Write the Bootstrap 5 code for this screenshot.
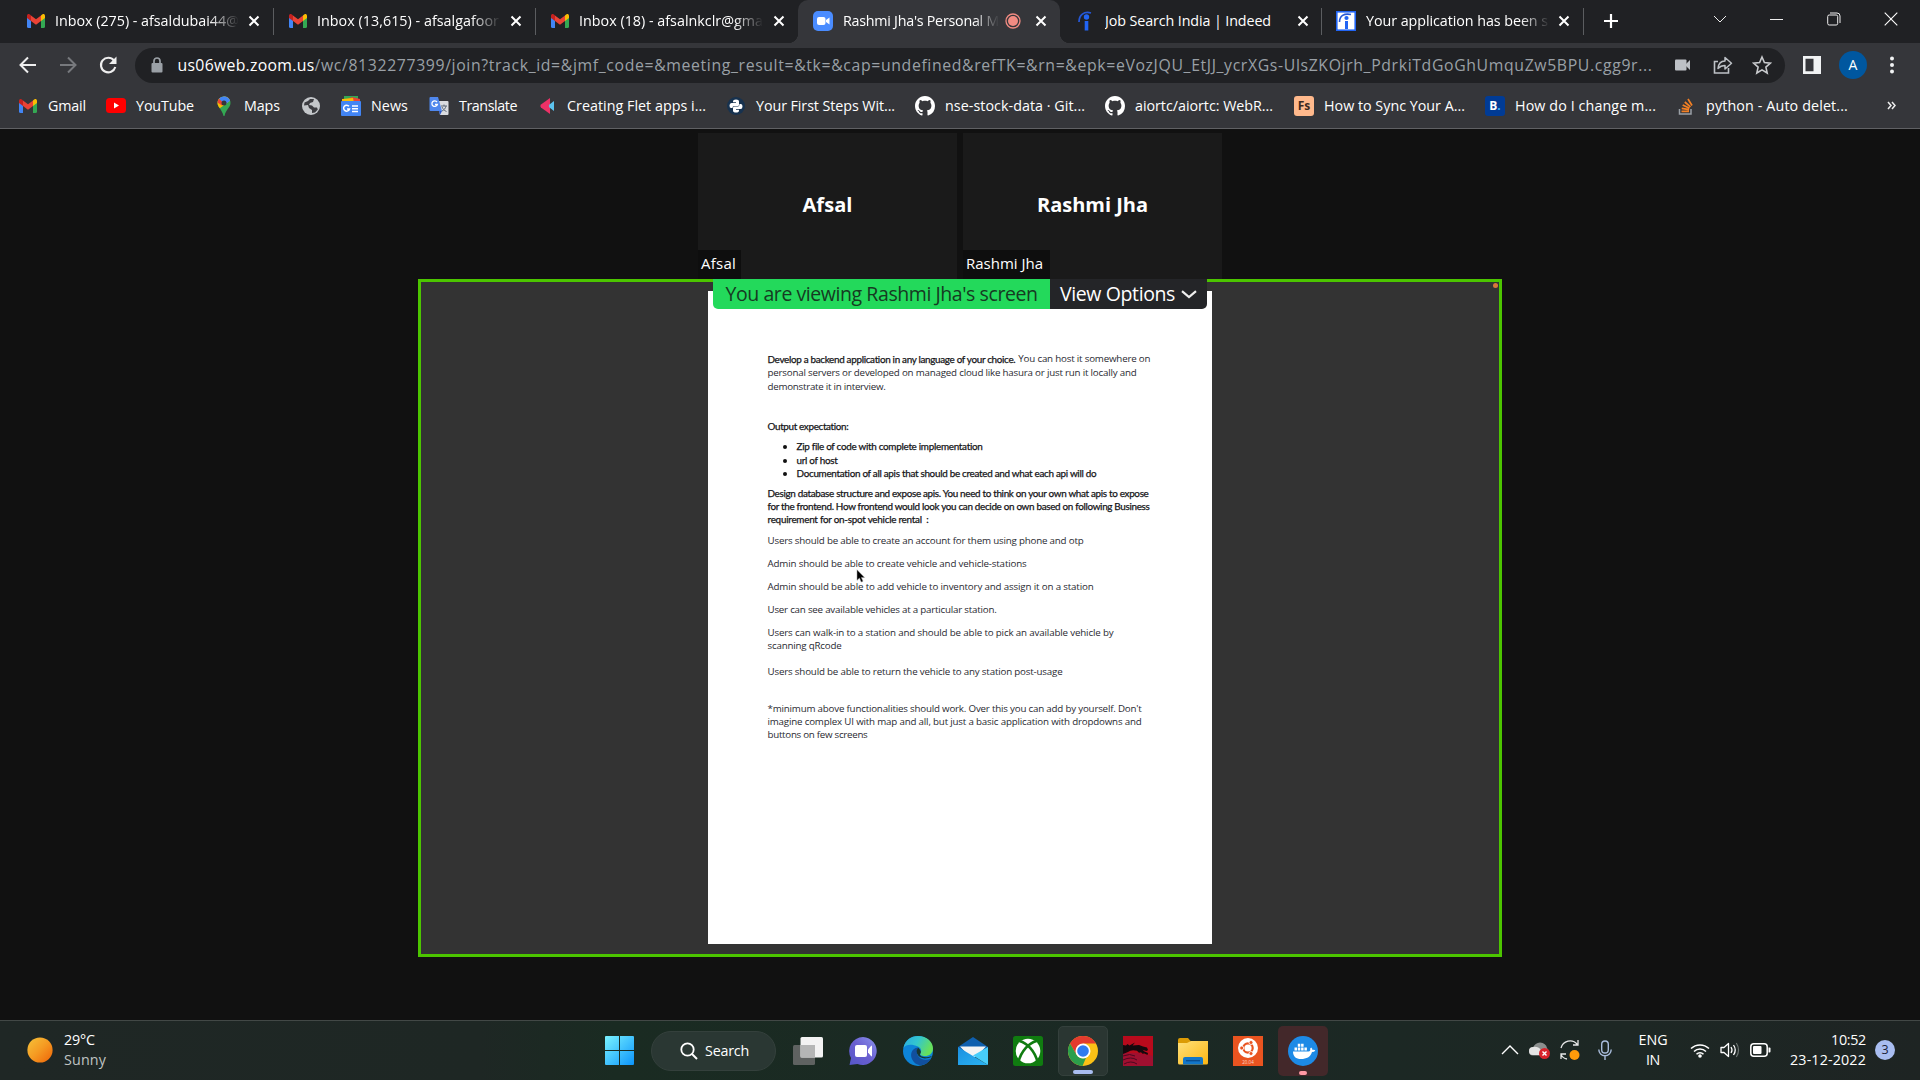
<!DOCTYPE html>
<html lang="en">
<head>
<meta charset="utf-8">
<title>Rashmi Jha's Personal Meeting Room</title>
<link href="https://cdn.jsdelivr.net/npm/bootstrap@5.3.0/dist/css/bootstrap.min.css" rel="stylesheet">
<style>
body{width:1920px;height:1080px;overflow:hidden;background:#111;color:#fff;font-family:"Open Sans","Noto Sans",sans-serif;font-size:14.3px;line-height:20px}
svg{display:block;flex:none}
.fit{display:inline-block;white-space:nowrap;flex:none}
.tabstrip{height:43px;background:#202124;padding-left:12px}
.tabx{width:262px;height:43px;padding:0 0 2px 14px;position:relative;flex:none}
.tabx .ico{width:20px;margin-right:9px}
.tabx .ttl{width:184px;overflow:hidden;white-space:nowrap}
.tabx .ttl.fade-r{-webkit-mask-image:linear-gradient(90deg,#000 84%,transparent);mask-image:linear-gradient(90deg,#000 84%,transparent)}
.tabx .cls{margin-left:9px}
.tabx.sep{border-right:1px solid #5b5d60;border-image:linear-gradient(transparent 9px,#5b5d60 9px,#5b5d60 34px,transparent 34px) 1}
.tabx.wide{padding-left:15px}
.tabx.wide .ico{margin-right:10px}
.tabx.wide .cls{margin-left:8px}
.tabx.on{background:#35363a;border-radius:10px 10px 0 0}
.tabx.on:before,.tabx.on:after{content:"";position:absolute;bottom:0;width:10px;height:10px}
.tabx.on:before{left:-10px;background:radial-gradient(circle at 0 0,transparent 10px,#35363a 10.5px)}
.tabx.on:after{right:-10px;background:radial-gradient(circle at 100% 0,transparent 10px,#35363a 10.5px)}
.winbtns{margin-left:auto;width:229px;height:37px}
.winbtns>div{width:57px}
.toolbar{height:44px;background:#35363a;padding-left:18px}
.omni{width:1650px;height:35px;border-radius:18px;background:#202124;margin-left:17px;padding-left:15px}
.url{color:#9aa0a6;font-size:15.8px;margin-left:13.500px}
.url b{color:#fff;font-weight:400}
.avatar{width:28px;height:28px;border-radius:50%;background:#00579f;font-size:14px}
.marks{height:42px;background:#35363a;border-bottom:1px solid #606164;padding:0 0 4px 18px}
.mk{flex:none;gap:10px}
.mk svg,.mk .sq{width:20px;height:20px;flex:none}
.sq{font-weight:700;font-size:12px;border-radius:3px}
.stage{height:891px;padding-top:4px}
.tile{width:259px;height:146px;background:#1a1a1a;position:relative}
.tile .who{font-weight:700;font-size:20px;padding-bottom:3px}
.tile .tag{position:absolute;left:0;bottom:0;height:29px;background:#0e0e0e;font-size:15px;padding:3px 0 0 3px}
.share{width:1084px;height:678px;border:3px solid #4cc500;background:#333;position:relative}
.banner{position:absolute;left:292px;top:-3px;width:494px;height:30px;font-size:19.5px;line-height:30px;border-radius:0 0 5px 5px;overflow:hidden}
.banner .g{width:337px;background:#23d95b;color:#163a22;padding-left:12.500px}
.banner .v{width:157px;background:#242528;padding-left:10px;gap:6px}
.dot{position:absolute;right:1px;top:1px;width:5px;height:5px;border-radius:50%;background:#d9773c}
.doc{width:504px;height:653px;margin:9px auto 0;background:#fff;color:#2a2a32;font-size:9.75px;padding:60.5px 0 0 59.5px;position:relative}
.doc .fit{display:block}
.cal{color:#151518;font-family:Lato,"Open Sans",sans-serif;font-size:9.9px;-webkit-text-stroke:.25px #151518}
.l14{line-height:14.3px}.l133{line-height:13.3px}.l13{line-height:13px}
.doc ul{margin:7px 0 0;padding:0 0 0 29px;list-style:none}
.doc li{position:relative}
.doc li:before{content:"";position:absolute;left:-14px;top:5px;width:4px;height:4px;border-radius:50%;background:#111}
.ptr{position:absolute;left:148px;top:278px}
.task{height:60px;background:linear-gradient(90deg,#1f2725 0,#1e2724 25%,#1a2b22 32%,#1b2924 60%,#1d2724 85%,#1e2423 100%);border-top:1px solid #424846;position:relative}
.task .wx{width:605px;padding-left:27px}
.srch{width:125px;height:40px;border-radius:20px;background:#2a3733;border:1px solid #34403c;margin:0 5px 0 17px;gap:7px;padding-left:28px}
.app{width:50px;height:50px;margin-right:5px;border-radius:5px;position:relative}
.app.act{background:#2a3632;border:1px solid #34403c}
.app.alert-r{background:#43282a}
.app i{position:absolute;bottom:1px;height:4px;border-radius:2px}
.lift{padding-bottom:2px}
.tray{margin-left:auto;width:419px;padding-bottom:1px}
.badge3{width:20px;height:20px;border-radius:50%;background:#a9bdf0;color:#1b2238;font-size:12.5px}
</style>
<script src="https://cdn.jsdelivr.net/npm/bootstrap@5.3.0/dist/js/bootstrap.bundle.min.js"></script>
</head>
<body>
<svg width="0" height="0" class="position-absolute">
<defs>
<linearGradient id="sun" x1="0" y1="0" x2="1" y2="1"><stop offset="0" stop-color="#f5c33a"/><stop offset=".5" stop-color="#f59a22"/><stop offset="1" stop-color="#ee6207"/></linearGradient>
<linearGradient id="win" x1="0" y1="0" x2="1" y2="1"><stop offset="0" stop-color="#7af3ff"/><stop offset="1" stop-color="#0c94fb"/></linearGradient>
<linearGradient id="chat" x1="0" y1="1" x2="1" y2="0"><stop offset="0" stop-color="#5556c8"/><stop offset=".5" stop-color="#6a5fd0"/><stop offset="1" stop-color="#8b93ee"/></linearGradient>
<linearGradient id="edg" x1="0" y1="0" x2="1" y2=".4"><stop offset="0" stop-color="#2aa9e0"/><stop offset=".5" stop-color="#33c6cf"/><stop offset="1" stop-color="#67e05a"/></linearGradient>
<linearGradient id="fold" x1="0" y1="0" x2="1" y2="1"><stop offset="0" stop-color="#ffe07a"/><stop offset="1" stop-color="#fbb613"/></linearGradient>
<linearGradient id="mailg" x1="0" y1="0" x2="1" y2="1"><stop offset="0" stop-color="#1b8fe0"/><stop offset="1" stop-color="#2bb4f2"/></linearGradient>
<symbol id="gm" viewBox="0 0 20 20"><path d="M1 5v10.500A1.500 1.500 0 0 0 2.500 17H5V8z" fill="#4285f4"/><path d="M19 5v10.500a1.500 1.500 0 0 1-1.500 1.500H15V8z" fill="#34a853"/><path d="M15 4.500V10l4-3V5c0-2-2-2.500-3.200-1.300z" fill="#fbbc04"/><path d="M5 10V4.500l5 3.800 5-3.800V10l-5 3.800z" fill="#ea4335"/><path d="M1 5v2l4 3V4.500l-.8-.8C3 2.500 1 3 1 5z" fill="#c5221f"/></symbol>
<symbol id="x" viewBox="0 0 12 12"><path d="M1.500 1.500l9 9m0-9l-9 9" stroke="#fff" stroke-width="2"/></symbol>
<symbol id="gh" viewBox="0 0 16 16"><path fill="#fff" d="M8 0C3.580 0 0 3.580 0 8c0 3.540 2.290 6.530 5.470 7.590.4.07.55-.17.55-.38 0-.19-.01-.82-.01-1.490-2.010.37-2.530-.49-2.690-.94-.09-.23-.48-.94-.82-1.130-.28-.15-.68-.52-.01-.53.63-.01 1.080.58 1.230.82.72 1.210 1.870.87 2.330.66.07-.52.28-.87.51-1.070-1.780-.2-3.640-.89-3.640-3.950 0-.87.31-1.590.82-2.150-.08-.2-.36-1.020.08-2.120 0 0 .67-.21 2.200.82.64-.18 1.320-.27 2-.27s1.360.09 2 .27c1.530-1.040 2.200-.82 2.200-.82.44 1.100.16 1.920.08 2.120.51.56.82 1.270.82 2.150 0 3.070-1.870 3.750-3.650 3.950.29.25.54.73.54 1.480 0 1.070-.01 1.930-.01 2.200 0 .21.15.46.55.38A8.010 8.010 0 0 0 16 8c0-4.420-3.580-8-8-8z"/></symbol>
</defs></svg>

<div class="tabstrip d-flex">
  <div class="tabx sep d-flex align-items-center"><svg class="ico" height="20"><use href="#gm"/></svg><div class="ttl fade-r"><span class="fit" data-w="184">Inbox (275) - afsaldubai44@</span></div><svg class="cls" width="12" height="12"><use href="#x"/></svg></div>
  <div class="tabx sep d-flex align-items-center"><svg class="ico" height="20"><use href="#gm"/></svg><div class="ttl fade-r"><span class="fit" data-w="182">Inbox (13,615) - afsalgafoor</span></div><svg class="cls" width="12" height="12"><use href="#x"/></svg></div>
  <div class="tabx d-flex align-items-center"><svg class="ico" height="20"><use href="#gm"/></svg><div class="ttl fade-r"><span class="fit" data-w="184">Inbox (18) - afsalnkclr@gma</span></div><svg class="cls" width="12" height="12" style="margin-left:10px"><use href="#x"/></svg></div>
  <div class="tabx wide on d-flex align-items-center"><svg class="ico" height="20" viewBox="0 0 20 20"><rect width="20" height="20" rx="5" fill="#4a8cff"/><rect x="4" y="6" width="8.500" height="8" rx="2" fill="#fff"/><path d="M13 9l3.500-2.500v7L13 11z" fill="#fff"/></svg><div class="ttl fade-r" style="width:156px"><span class="fit" data-w="156">Rashmi Jha's Personal M</span></div><svg width="16" height="16" style="margin-left:6px"><circle cx="8" cy="8" r="7" fill="none" stroke="#f28b82" stroke-width="1.300"/><circle cx="8" cy="8" r="5" fill="#f28b82"/></svg><svg width="12" height="12" style="margin-left:14px"><use href="#x"/></svg></div>
  <div class="tabx wide sep d-flex align-items-center"><svg class="ico" height="20" viewBox="0 0 20 20"><path d="M4 11C4 4 9 0 16 2" stroke="#2557d6" stroke-width="1.800" fill="none"/><circle cx="11.500" cy="6" r="2.700" fill="#2164f3"/><path d="M9.700 10h3.600v9.500H9.700z" fill="#2164f3"/></svg><div class="ttl"><span class="fit" data-w="166">Job Search India | Indeed</span></div><svg class="cls" width="12" height="12"><use href="#x"/></svg></div>
  <div class="tabx sep d-flex align-items-center"><svg class="ico" height="20" viewBox="0 0 20 20" style="margin-right:10px"><rect x=".8" y=".8" width="18.400" height="18.400" fill="#fff" stroke="#2164f3" stroke-width="1.600"/><path d="M3.500 11C3.500 5 8 2 15 3.500" stroke="#2557d6" stroke-width="1.600" fill="none"/><circle cx="10.500" cy="7" r="2.100" fill="#2164f3"/><path d="M9 10h3v8H9z" fill="#2164f3"/></svg><div class="ttl fade-r"><span class="fit" data-w="182">Your application has been s</span></div><svg class="cls" width="12" height="12" style="margin-left:8px"><use href="#x"/></svg></div>
  <svg width="16" height="16" style="margin:13px 0 0 19px"><path d="M8 1v14M1 8h14" stroke="#fff" stroke-width="2.200"/></svg>
  <div class="winbtns d-flex align-items-center">
    <div class="d-flex justify-content-center"><svg width="14" height="14"><path d="M1 4l6 6 6-6" stroke="#eee" fill="none"/></svg></div>
    <div class="d-flex justify-content-center"><svg width="14" height="14"><path d="M0 7.500h13" stroke="#eee"/></svg></div>
    <div class="d-flex justify-content-center"><svg width="14" height="14"><rect x=".7" y="3" width="10" height="10" rx="1.500" fill="none" stroke="#eee"/><path d="M3 1h7a3 3 0 0 1 3 3v7" stroke="#eee" fill="none"/></svg></div>
    <div class="d-flex justify-content-center"><svg width="14" height="14"><path d="M.7.700l12.600 12.600m0-12.600L.7 13.300" stroke="#fff" stroke-width="1.100"/></svg></div>
  </div>
</div>

<div class="toolbar d-flex align-items-center">
  <svg width="20" height="20"><path d="M18 10H3M10 2.500L2.500 10l7.500 7.500" stroke="#eee" stroke-width="2" fill="none"/></svg>
  <svg width="20" height="20" style="margin-left:20px"><path d="M2 10h15M10 2.500l7.500 7.500-7.500 7.500" stroke="#77797d" stroke-width="2" fill="none"/></svg>
  <svg width="20" height="20" style="margin-left:20px"><path d="M16 5.500A7.300 7.300 0 1 0 17.300 12" stroke="#eee" stroke-width="2.100" fill="none"/><path d="M18.500 1.500v7.500h-7.500z" fill="#eee"/></svg>
  <div class="omni d-flex align-items-center">
    <svg width="14" height="18"><rect x="1.500" y="7" width="11" height="9.500" rx="1" fill="#9aa0a6"/><path d="M4 7.500V5a3 3 0 0 1 6 0v2.500" stroke="#9aa0a6" stroke-width="1.700" fill="none"/></svg>
    <div class="url"><span class="fit" data-w="137"><b>us06web.zoom.us</b></span><span class="fit" data-w="1338">/wc/8132277399/join?track_id=&amp;jmf_code=&amp;meeting_result=&amp;tk=&amp;cap=undefined&amp;refTK=&amp;rn=&amp;epk=eVozJQU_EtJJ_ycrXGs-UlsZKOjrh_PdrkiTdGoGhUmquZw5BPU.cgg9r...</span></div>
    <svg width="18" height="16" style="margin-left:21.500px"><rect x="1" y="2.500" width="11.500" height="11" rx="1" fill="#bdc1c6"/><path d="M12 7l4-4v10l-4-4z" fill="#bdc1c6"/></svg>
    <svg width="20" height="20" style="margin-left:21px"><path d="M5 6.500H1.500v11.500h14V13" stroke="#bdc1c6" stroke-width="1.600" fill="none"/><path d="M5 13.500c.5-5 3-7.500 7-7.500V2.500l6.500 5.700L12 14v-3.500c-3 0-5 .8-7 3z" stroke="#bdc1c6" stroke-width="1.500" fill="none" stroke-linejoin="round"/></svg>
    <svg width="20" height="20" style="margin-left:19px"><path d="M10 2l2.400 5.500 6 .6-4.500 4 1.300 5.900L10 14.900 4.800 18l1.300-5.900-4.500-4 6-.6z" stroke="#c8cacd" stroke-width="1.600" fill="none"/></svg>
  </div>
  <svg width="18" height="18" style="margin-left:18px"><path d="M0 0h18v18H0zM2.500 2.800v12.400h8V2.800z" fill="#f1f3f4" fill-rule="evenodd"/></svg>
  <div class="avatar d-flex align-items-center justify-content-center" style="margin-left:18px">A</div>
  <svg width="6" height="18" style="margin-left:22px"><circle cx="3" cy="2.500" r="2" fill="#f1f3f4"/><circle cx="3" cy="9" r="2" fill="#f1f3f4"/><circle cx="3" cy="15.500" r="2" fill="#f1f3f4"/></svg>
</div>

<div class="marks d-flex align-items-center">
  <div class="mk d-flex align-items-center" style="width:88px"><svg><use href="#gm"/></svg><span class="fit" data-w="38">Gmail</span></div>
  <div class="mk d-flex align-items-center" style="width:108px"><svg viewBox="0 0 20 20"><rect y="2" width="20" height="15" rx="3.500" fill="#f00"/><path d="M8 6.500l5 3-5 3z" fill="#fff"/></svg><span class="fit" data-w="58">YouTube</span></div>
  <div class="mk d-flex align-items-center" style="width:87px"><svg viewBox="0 0 20 20"><path d="M3.500 7a6.500 6.500 0 0 1 13 0c0 4.500-4.500 6-6 13H9.500C8 13 3.500 11.500 3.500 7z" fill="#34a853"/><path d="M16.100 4.800L5.800 12.200C4 10 3.500 8.500 3.500 7a6.500 6.500 0 0 1 12.600-2.200z" fill="#fbbc04"/><path d="M14.300 2.200L8 9.500 3.500 6.500a6.500 6.500 0 0 1 1.600-3.700z" fill="#ea4335"/><path d="M5 2.800a6.500 6.500 0 0 1 11.100 2L10.500 9 8 5.500z" fill="#4285f4"/><circle cx="10" cy="7" r="2.500" fill="#35363a"/></svg><span class="fit" data-w="36">Maps</span></div>
  <div class="mk d-flex align-items-center" style="width:40px"><svg viewBox="0 0 20 20"><circle cx="10" cy="10" r="9" fill="#c4c7ca"/><path d="M9 3l4 0-1 3-3 1-1 2 3 .5 2 2 3 0 .8 2-2.800 3L11 17l0-3-3-2-1-3-4 .500.500-3L7 5z" fill="#3c3d41"/></svg></div>
  <div class="mk d-flex align-items-center" style="width:88px"><svg viewBox="0 0 20 20"><path d="M3 0h14v8H3z" fill="#34a853"/><path d="M2 5l9-4 8 2v5H2z" fill="#ea4335"/><path d="M1 3l11-1 1 5H1z" fill="#fbbc04"/><rect y="5" width="20" height="15" rx="1" fill="#4285f4"/><path d="M8 10.300A3 3 0 1 0 8.500 13H6" stroke="#fff" stroke-width="1.500" fill="none"/><path d="M11 10h6M11 12.800h6M11 15.500h6" stroke="#fff" stroke-width="1.400"/></svg><span class="fit" data-w="37">News</span></div>
  <div class="mk d-flex align-items-center" style="width:108px"><svg viewBox="0 0 20 20"><path d="M8 5h10.500a1 1 0 0 1 1 1v12a1 1 0 0 1-1 1H11z" fill="#dadce0"/><path d="M12 10h6m-3-1.500V10m2 0c-.5 2.500-2 4-4 5m0-4c1 2 2 3.500 4.500 4.500" stroke="#5f6b7a" fill="none"/><path d="M1.500 1H9l4 14H1.500a1 1 0 0 1-1-1V2a1 1 0 0 1 1-1z" fill="#4f87ed"/><path d="M10 15h3l-2 4z" fill="#2a56c6"/><path d="M8 6A2.800 2.800 0 1 0 8.400 8.500H6" stroke="#fff" stroke-width="1.300" fill="none"/></svg><span class="fit" data-w="58">Translate</span></div>
  <div class="mk d-flex align-items-center" style="width:189px"><svg viewBox="0 0 20 20"><path d="M13 2v16L4 11.500Q2.500 10 4 8.500z" fill="#ee3167"/><path d="M17 5v10l-4.500-3.500Q11 10 12.500 8.500z" fill="#5cc4ef"/></svg><span class="fit" data-w="139">Creating Flet apps i...</span></div>
  <div class="mk d-flex align-items-center" style="width:189px"><svg viewBox="0 0 20 20"><circle cx="10" cy="10" r="9" fill="#17324f"/><path d="M7 5.500Q7 3.500 10 3.500t3 2V9q0 1-1.200 1H8Q6.500 10 6.500 12H5Q3.500 12 3.500 9.500T5.500 7H10V6.300H7z" fill="#fff"/><path d="M13 14.500q0 2-3 2t-3-2V12q0-1.400 1.500-1.400H12Q13.500 10.500 13.500 8H15q1.500 0 1.500 2.500T14.500 13H10v.7h3z" fill="#fff"/></svg><span class="fit" data-w="139">Your First Steps Wit...</span></div>
  <div class="mk d-flex align-items-center" style="width:190px"><svg><use href="#gh"/></svg><span class="fit" data-w="140">nse-stock-data · Git...</span></div>
  <div class="mk d-flex align-items-center" style="width:189px"><svg><use href="#gh"/></svg><span class="fit" data-w="138">aiortc/aiortc: WebR...</span></div>
  <div class="mk d-flex align-items-center" style="width:191px"><div class="sq d-flex align-items-center justify-content-center" style="background:#ffb98c;color:#3b2a20">Fs</div><span class="fit" data-w="141">How to Sync Your A...</span></div>
  <div class="mk d-flex align-items-center" style="width:191px"><div class="sq d-flex align-items-center justify-content-center" style="background:#003b95">B<span style="color:#3fb6f5">.</span></div><span class="fit" data-w="141">How do I change m...</span></div>
  <div class="mk d-flex align-items-center" style="width:211px"><svg viewBox="0 0 20 20"><path d="M3.500 13v5h11.500v-5" stroke="#9aa0a6" stroke-width="1.500" fill="none"/><path d="M5.500 15.300h7.500M5.700 12.300l7.400 1.300M6.700 9l6.800 3.200M8.800 6l5.700 4.900M12 3l4 6.500" stroke="#f48024" stroke-width="1.700"/></svg><span class="fit" data-w="142">python - Auto delet...</span></div>
  <svg width="9" height="9"><path d="M1 1l3 3.500L1 8M5 1l3 3.500L5 8" stroke="#eee" stroke-width="1.500" fill="none"/></svg>
</div>

<main class="stage">
  <div class="d-flex justify-content-center" style="gap:6px">
    <div class="tile d-flex align-items-center justify-content-center"><div class="who"><span class="fit" data-w="50">Afsal</span></div><div class="tag" style="width:43px"><span class="fit" data-w="35">Afsal</span></div></div>
    <div class="tile d-flex align-items-center justify-content-center"><div class="who"><span class="fit" data-w="111">Rashmi Jha</span></div><div class="tag" style="width:87px"><span class="fit" data-w="77">Rashmi Jha</span></div></div>
  </div>
  <div class="share mx-auto">
    <div class="d-flex"><article class="doc">
      <div class="l14"><div class="d-flex" style="gap:3px"><span class="fit cal" data-w="248">Develop a backend application in any language of your choice.</span><span class="fit" data-w="132">You can host it somewhere on</span></div><span class="fit" data-w="369">personal servers or developed on managed cloud like hasura or just run it locally and</span><span class="fit" data-w="118">demonstrate it in interview.</span></div>
      <div class="l133 cal" style="margin-top:25.600px"><span class="fit" data-w="81">Output expectation:</span></div>
      <ul class="l133 cal"><li><span class="fit" data-w="186">Zip file of code with complete implementation</span></li><li><span class="fit" data-w="41">url of host</span></li><li><span class="fit" data-w="300">Documentation of all apis that should be created and what each api will do</span></li></ul>
      <div class="l133 cal" style="margin-top:6.600px"><span class="fit" data-w="381">Design database structure and expose apis. You need to think on your own what apis to expose</span><span class="fit" data-w="382">for the frontend. How frontend would look you can decide on own based on following Business</span><span class="fit" data-w="161">requirement for on-spot vehicle rental &nbsp;:</span></div>
      <div class="l13" style="margin-top:7.300px"><span class="fit" data-w="316">Users should be able to create an account for them using phone and otp</span></div>
      <div class="l13" style="margin-top:10px"><span class="fit" data-w="259">Admin should be able to create vehicle and vehicle-stations</span></div>
      <div class="l13" style="margin-top:10px"><span class="fit" data-w="326">Admin should be able to add vehicle to inventory and assign it on a station</span></div>
      <div class="l13" style="margin-top:10px"><span class="fit" data-w="229">User can see available vehicles at a particular station.</span></div>
      <div class="l13" style="margin-top:10px"><span class="fit" data-w="346">Users can walk-in to a station and should be able to pick an available vehicle by</span><span class="fit" data-w="74">scanning qRcode</span></div>
      <div class="l13" style="margin-top:13.500px"><span class="fit" data-w="295">Users should be able to return the vehicle to any station post-usage</span></div>
      <div class="l13" style="margin-top:23.400px"><span class="fit" data-w="374">*minimum above functionalities should work. Over this you can add by yourself. Don't</span><span class="fit" data-w="374">imagine complex UI with map and all, but just a basic application with dropdowns and</span><span class="fit" data-w="100">buttons on few screens</span></div>
      <svg class="ptr" width="10" height="15"><path d="M1 .8v10.500l2.500-2.300 1.700 4 1.800-.8-1.700-3.800h3.200z" fill="#000" stroke="#999" stroke-width=".5"/></svg>
    </article></div>
    <div class="banner d-flex"><div class="g"><span class="fit" data-w="312">You are viewing Rashmi Jha's screen</span></div><div class="v d-flex align-items-center"><span class="fit" data-w="115">View Options</span><svg width="16" height="9"><path d="M1 1.200l7 5.800 7-5.800" stroke="#eee" stroke-width="2.200" fill="none"/></svg></div></div>
    <span class="dot"></span>
  </div>
</main>

<footer class="task d-flex align-items-center">
  <div class="wx d-flex align-items-center lift"><svg width="26" height="26"><circle cx="13" cy="13" r="12.600" fill="url(#sun)"/></svg><div style="margin-left:11px"><span class="fit d-block" data-w="31">29°C</span><span class="fit d-block" data-w="42" style="color:#bfc3c2">Sunny</span></div></div>
  <svg width="29" height="29" viewBox="0 0 29 29"><path d="M0 1Q0 0 1 0h13v14H0zM15 0h13q1 0 1 1v13H15zM0 15h14v14H1q-1 0-1-1zM15 15h14v13q0 1-1 1H15z" fill="url(#win)"/></svg>
  <div class="srch d-flex align-items-center"><svg width="18" height="18"><circle cx="7.500" cy="7.500" r="6.200" fill="none" stroke="#fff" stroke-width="1.800"/><path d="M12 12l5 5" stroke="#fff" stroke-width="2"/></svg><span class="fit" data-w="44">Search</span></div>
  <div class="d-flex">
    <div class="app d-flex align-items-center justify-content-center" style="margin-left:2px"><svg width="30" height="30"><rect x="0" y="9" width="22" height="20" rx="1.500" fill="#5f6261"/><rect x="7.500" y="1" width="22.500" height="20.500" rx="1.500" fill="#f3f3f3"/><path d="M7.500 9H22v12.500H7.500z" fill="#b5b6b6"/></svg></div>
    <div class="app d-flex align-items-center justify-content-center"><svg width="30" height="30"><path d="M15 1a14 14 0 1 1-5.500 27L1.500 29 3 22A14 14 0 0 1 15 1z" fill="url(#chat)"/><rect x="7" y="9" width="12" height="12" rx="2" fill="#fff"/><path d="M20 13.500l3-3.500q1-1 1 .5v9q0 1.500-1 .5l-3-3.500z" fill="#fff"/></svg></div>
    <div class="app d-flex align-items-center justify-content-center"><svg width="30" height="30"><circle cx="15" cy="15" r="15" fill="#0d84d8"/><path d="M.5 12C2 4 8 0 15 0c9 0 15 6 15 12.500 0 5-4 7.500-8 7.500-4 0-5.500-1.500-4.500-3 1.200-1.800 1-5-2.500-6.500C9 8 3 8 .5 12z" fill="url(#edg)"/><path d="M15 11.500c-7 .5-9 8.500-4.500 14 3 4 8.500 4.500 12 2.500 2.500-1.300 4.500-3.500 5.500-5.500-4.500 2-9.500 1.500-12-1.500-2.800-3-2.500-6.500-1-9.500z" fill="#114f9e"/><path d="M15 11.500q-2 3-1 6 2 4.500 8 5 4-.2 6.500-1.500.5-.8-.5-.8-3 1.300-7 .8-3.500-.4-4-2-.2-1 .7-2 .8-2.500-2.700-5.500z" fill="#173531"/></svg></div>
    <div class="app d-flex align-items-center justify-content-center"><svg width="30" height="30"><path d="M0 11L15 1l15 10v5H0z" fill="#0f5fae"/><path d="M2 10.500h26L18 21h-6z" fill="#f4f4f4"/><path d="M0 11l30 18H0z" fill="url(#mailg)"/><path d="M30 11v18L15 19.500z" fill="#47cdfa"/></svg></div>
    <div class="app d-flex align-items-center justify-content-center"><svg width="30" height="30"><rect width="30" height="30" rx="2.500" fill="#107c10"/><circle cx="15" cy="15" r="12.300" fill="#fff"/><path d="M6.500 5C14 7 22 15 24.500 26M23.500 5C16 7 8 15 5.500 26" stroke="#107c10" stroke-width="2.600" fill="none"/></svg></div>
    <div class="app act d-flex align-items-center justify-content-center"><svg width="30" height="30"><circle cx="15" cy="15" r="15" fill="#fbc116"/><path d="M2 7.500A15 15 0 0 1 28 7.500H15L8.500 18.700z" fill="#e33b2e"/><path d="M2 7.500l6.500 11.200a7.500 7.500 0 0 0 9.500 3L14.500 30A15 15 0 0 1 2 7.500z" fill="#2c9f4b"/><circle cx="15" cy="15" r="7.500" fill="#fff"/><circle cx="15" cy="15" r="5.800" fill="#2f7bf0"/></svg><i style="width:20px;background:#a9bdf0"></i></div>
    <div class="app d-flex align-items-center justify-content-center"><svg width="30" height="30"><rect width="30" height="30" fill="#b80a1c"/><path d="M0 17h14l16 3v10H0z" fill="#9f1030"/><path d="M0 9l3 .5 1.500-1.500 2 1.500L12 6.500l-2.500 3L16 9l4 1.500 4 1 1 2.500-1.500 1-4-1.300 2 1.800 3.500 1.500-.5 2-3-1.500-2 .3-1.500-1.500-2 .5-2-2Q8 13.500 5 16L0 18z" fill="#14090d"/><path d="M0 20q7-3 12 0M0 24q8-4 14 0M1 28q7-4 13 0" stroke="#4c0820" stroke-width="1" fill="none"/></svg></div>
    <div class="app d-flex align-items-center justify-content-center"><svg width="30" height="30"><path d="M0 4q0-2 2-2h8l3 3.500V10H0z" fill="#dc9b05"/><path d="M0 7h9l4-2h17v22q0 1.500-1.500 1.500h-27Q0 28.500 0 27z" fill="url(#fold)"/><path d="M5 28.500V23q0-2 2-2h16q2 0 2 2v5.500z" fill="#1276c8"/><path d="M8 24.700h14" stroke="#0a4b8d" stroke-width="1.300"/></svg></div>
    <div class="app d-flex align-items-center justify-content-center"><svg width="30" height="30"><rect width="30" height="30" fill="#e95420"/><circle cx="15" cy="12" r="10" fill="#fff"/><circle cx="15" cy="12" r="4.700" fill="none" stroke="#e95420" stroke-width="2.200"/><g fill="#e95420" stroke="#fff" stroke-width=".8"><circle cx="8.700" cy="12" r="2"/><circle cx="18" cy="6.500" r="2"/><circle cx="18" cy="17.500" r="2"/></g><text x="15" y="28" font-size="4.500" text-anchor="middle" fill="#fbd9cc">20.04</text></svg></div>
    <div class="app alert-r d-flex align-items-center justify-content-center"><svg width="30" height="30"><circle cx="15" cy="15" r="15" fill="#1d8ae6"/><path d="M5 15.500h15.500c1.500 0 2-1 1.700-3l1-1q1.300 1 1.300 2.500 2-.5 2.800.5-1 1.500-3.300 1.500C22.500 21 18.500 23 13 23 8 23 5 20.500 5 15.500z" fill="#fff"/><path d="M6.500 14.500v-3h2.500v3zm3.300 0v-3h2.500v3zm3.300 0v-3h2.500v3zm3.300 0v-3h2.500v3zM9.800 10.800v-3h2.500v3zm3.300 0v-3h2.500v3z" fill="#fff"/></svg><i style="width:8px;background:#ff99a4"></i></div>
  </div>
  <div class="tray d-flex align-items-center">
    <svg width="18" height="12"><path d="M1 10l8-8 8 8" stroke="#fff" stroke-width="1.400" fill="none"/></svg>
    <svg width="22" height="20" style="margin-left:10px"><path d="M4 15.500a4 4 0 0 1 0-8Q6 3 11 2.500q6 .5 7 5.500l2 3-9 4.500z" fill="#8b8f8e"/><path d="M4 15a4 4 0 0 1 0-8q5-1 8 3v5z" fill="#e4e4e4"/><circle cx="15.500" cy="13.500" r="5.500" fill="#d8232a"/><path d="M13.500 11.500l4 4m0-4l-4 4" stroke="#fff" stroke-width="1.400"/></svg>
    <svg width="22" height="22" style="margin-left:8px"><path d="M2 9C4 2 13-1 18.500 5.500M19 1v5h-5M2 20v-5h5M2 15.500q2 4 6 4.500" stroke="#e8e8e8" stroke-width="1.300" fill="none"/><circle cx="15.500" cy="16" r="5" fill="#ff9b0a"/></svg>
    <svg width="14" height="20" style="margin-left:17px"><rect x="3.700" y="1" width="6.600" height="12" rx="3.300" fill="none" stroke="#a9bddc" stroke-width="1.400"/><path d="M.8 9.500a6.200 6.200 0 0 0 12.400 0M7 16v4" stroke="#a9bddc" stroke-width="1.400" fill="none"/></svg>
    <div class="text-center" style="width:60px;margin-left:11px;"><span class="fit" data-w="29">ENG</span><br><span class="fit" data-w="14">IN</span></div>
    <svg width="20" height="16" style="margin-left:7px"><path d="M1 6.500a13 13 0 0 1 18 0M4 9.500a8.700 8.700 0 0 1 12 0M6.500 12.300a5 5 0 0 1 7 0" stroke="#fff" stroke-width="1.500" fill="none"/><circle cx="10" cy="14" r="1.800" fill="#fff"/></svg>
    <svg width="20" height="18" style="margin-left:10px"><path d="M1 6.500h3L8.500 2.500v13L4 11.500H1z" stroke="#fff" stroke-width="1.300" fill="none" stroke-linejoin="round"/><path d="M11 6q2 3 0 6M13.500 4q3.500 5 0 10" stroke="#fff" stroke-width="1.300" fill="none"/><path d="M16.300 2q4.500 7 0 14" stroke="#6b7371" stroke-width="1.200" fill="none"/></svg>
    <svg width="21" height="14" style="margin-left:10px"><rect x=".8" y=".8" width="16.400" height="12.400" rx="3" fill="none" stroke="#fff" stroke-width="1.500"/><rect x="3" y="3" width="8.500" height="8" rx="1" fill="#fff"/><path d="M18.500 4.500h1q1 0 1 1v3q0 1-1 1h-1z" fill="#fff"/></svg>
    <div class="text-end" style="width:76px;margin-left:19px"><span class="fit" data-w="35">10:52</span><br><span class="fit" data-w="76">23-12-2022</span></div>
    <div class="badge3 d-flex align-items-center justify-content-center" style="margin-left:9px">3</div>
  </div>
</footer>
<script>
document.querySelectorAll('.fit').forEach(function (el) {
  var target = +el.dataset.w, n = el.textContent.length;
  var r = document.createRange();
  r.selectNodeContents(el);
  var w = r.getBoundingClientRect().width;
  el.style.letterSpacing = ((target - w) / n).toFixed(3) + 'px';
});
</script>
</body>
</html>
